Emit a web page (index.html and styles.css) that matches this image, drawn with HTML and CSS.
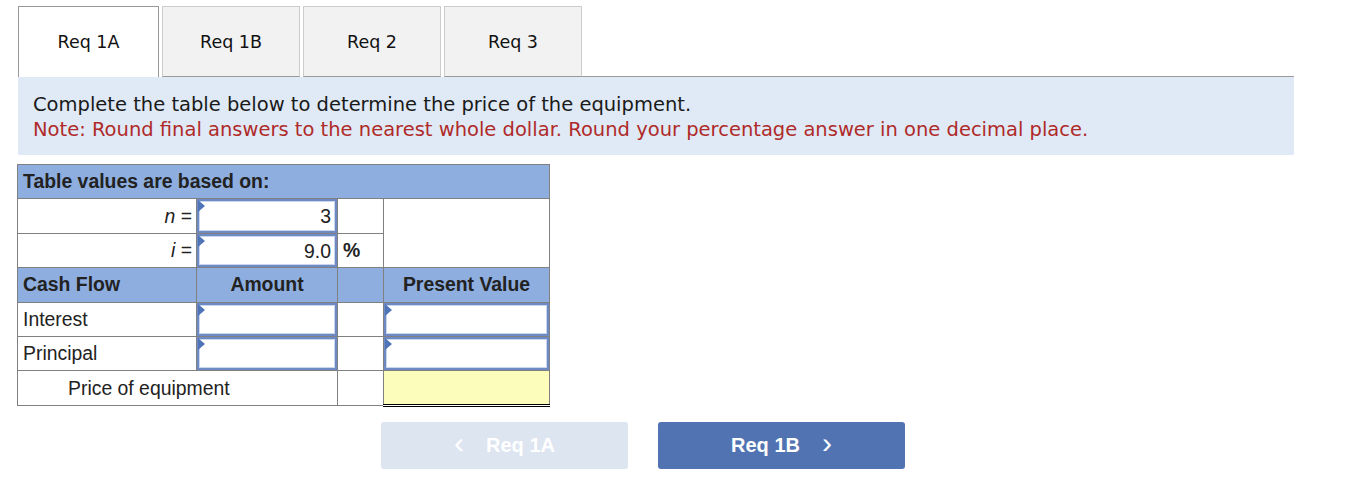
FILE: index.html
```html
<!DOCTYPE html>
<html>
<head>
<meta charset="utf-8">
<link rel="stylesheet" href="styles.css">
</head>
<body>
<div class="page">
  <div class="tabs">
    <div class="tab active">Req 1A</div>
    <div class="tab">Req 1B</div>
    <div class="tab">Req 2</div>
    <div class="tab">Req 3</div>
    <div class="tab-fill"></div>
  </div>
  <div class="panel">
    <div class="instr">Complete the table below to determine the price of the equipment.</div>
    <div class="note">Note: Round final answers to the nearest whole dollar. Round your percentage answer in one decimal place.</div>
  </div>
  <table class="grid">
    <colgroup>
      <col class="c1"><col class="c2"><col class="c3"><col class="c4">
    </colgroup>
    <tr class="hdr"><td colspan="4" class="left">Table values are based on:</td></tr>
    <tr>
      <td class="right"><i>n</i> =</td>
      <td class="inp"><div class="box num">3</div></td>
      <td></td>
      <td rowspan="2"></td>
    </tr>
    <tr>
      <td class="right"><i>i</i> =</td>
      <td class="inp"><div class="box num">9.0</div></td>
      <td class="pct">%</td>
    </tr>
    <tr class="hdr">
      <td class="left">Cash Flow</td>
      <td class="center">Amount</td>
      <td></td>
      <td class="center">Present Value</td>
    </tr>
    <tr>
      <td class="left">Interest</td>
      <td class="inp"><div class="box"></div></td>
      <td></td>
      <td class="inp"><div class="box"></div></td>
    </tr>
    <tr>
      <td class="left">Principal</td>
      <td class="inp"><div class="box"></div></td>
      <td></td>
      <td class="inp"><div class="box"></div></td>
    </tr>
    <tr>
      <td colspan="2" class="indent">Price of equipment</td>
      <td></td>
      <td class="total"></td>
    </tr>
  </table>
  <div class="nav">
    <div class="btn prev"><span class="chev">&lsaquo;</span><span>Req 1A</span></div>
    <div class="btn next"><span>Req 1B</span><span class="chev">&rsaquo;</span></div>
  </div>
</div>
</body>
</html>
```

FILE: styles.css
```css
html, body { margin: 0; padding: 0; background: #fff; }
.page { padding: 6px 70px 0 18px; }
.tabs { display: flex; height: 71px; }
.tab {
  margin-right: 3px;
  background: #f2f2f2;
  border: 1px solid #cccccc;
  border-bottom: 1px solid #999;
  display: flex; align-items: center; justify-content: center;
  font-family: "DejaVu Sans", sans-serif;
  font-size: 17.5px;
  color: #111;
  box-sizing: border-box;
  width: 138px;
}
.tab.active {
  width: 141px;
  background: #fff;
  border: 1px solid #999;
  border-bottom: none;
}
.tab-fill { flex: 1; border-bottom: 1px solid #999; margin-left: -3px; }
.panel {
  background: #dfeaf6;
  padding: 15px 15px 0 15px;
  font-family: "DejaVu Sans", sans-serif;
  font-size: 19.5px;
  line-height: 25px;
  height: 63px;
}
.instr { color: #1a1a1a; }
.note { color: #b02a2a; }
.grid {
  margin-top: 9px;
  margin-left: -1px;
  border-collapse: collapse;
  font-family: "Liberation Sans", Arial, sans-serif;
  font-size: 19.4px;
  color: #222;
  table-layout: fixed;
  width: 532px;
}
.c1 { width: 179px; }
.c2 { width: 141px; }
.c3 { width: 46px; }
.c4 { width: 166px; }
.grid td {
  border: 1px solid #808080;
  height: 34px;
  padding: 0;
  box-sizing: border-box;
}
.grid tr { height: 34.4px; }
.hdr td { background: #8eaee0; font-weight: bold; }
.left { padding-left: 5px !important; text-align: left; }
.right { text-align: right; padding-right: 4px !important; }
.center { text-align: center; }
.indent { padding-left: 50px !important; }
.pct { padding-left: 5px !important; font-weight: bold; }
.inp { position: relative; }
.box {
  position: absolute;
  left: 0; right: 0; top: 0; bottom: 0;
  border: 2px solid #6d8ac4;
  box-shadow: inset 0 0 0 1px #c9d6ee;
  background: #fff;
  box-sizing: border-box;
}
.box::before {
  content: "";
  position: absolute;
  left: -1px; top: -1px;
  border-top: 6px solid transparent;
  border-bottom: 6px solid transparent;
  border-left: 7px solid #4f74b8;
}
.box.num {
  text-align: right;
  padding-right: 4px;
  line-height: 30px;
}
.total {
  background: #fdfdbb;
  border-top: 1px solid #000 !important;
  border-bottom: 3px double #000 !important;
}
.nav {
  display: flex;
  gap: 30px;
  margin-top: 15px;
  margin-left: 363px;
}
.btn {
  width: 247px;
  height: 47px;
  border-radius: 3px;
  display: flex; align-items: center; justify-content: center;
  gap: 22px;
  font-family: "Liberation Sans", Arial, sans-serif;
  font-weight: bold;
  font-size: 20px;
  color: #fff;
}
.prev { background: #dde5f0; }
.next { background: #5173b2; }
.chev { font-size: 30px; line-height: 1; margin-top: -4px; font-weight: normal; }
```
